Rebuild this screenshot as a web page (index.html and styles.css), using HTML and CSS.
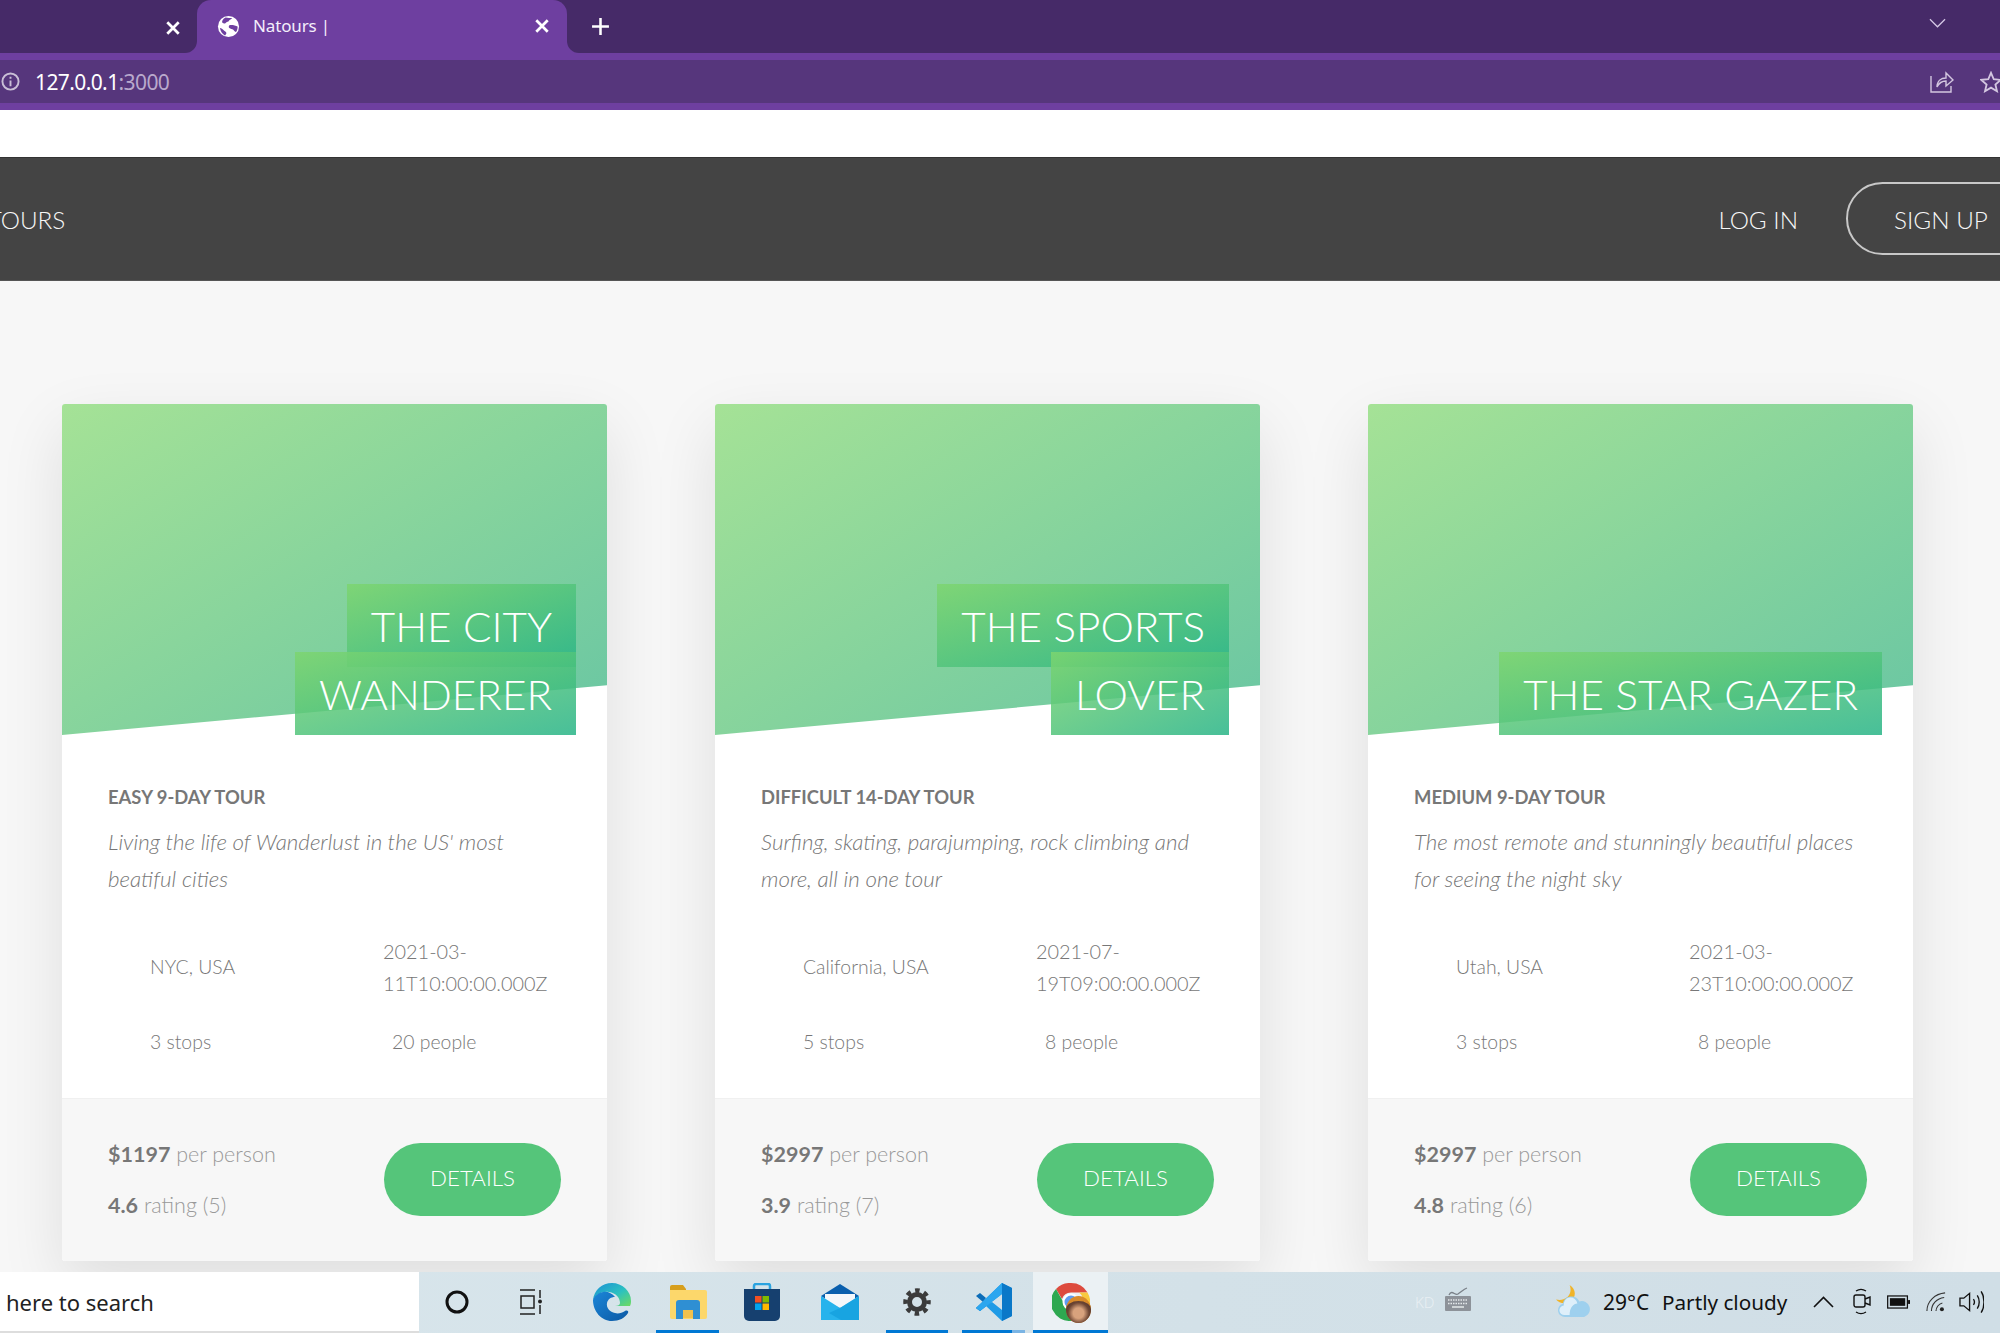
FILE: index.html
```html
<!DOCTYPE html>
<html lang="en">
<head>
<meta charset="utf-8">
<title>Natours</title>
<link rel="stylesheet" href="styles.css">
</head>
<body>
<div class="screen">
  <header class="browser">
    <div class="tabstrip">
      <div class="tab-side tab-side--left">
        <svg class="tab-x" viewBox="0 0 14 14"><path d="M2 2l10 10M12 2L2 12"/></svg>
      </div>
      <div class="tab-wrap">
        <div class="tab">
          <svg class="globe" viewBox="0 0 24 24"><circle cx="12" cy="12" r="11" fill="#fff"/><path fill="#6e3fa0" d="M9 2.500c2 .6 5 .4 7 .6-1 1.400-3 1.500-3.500 3-.4 1.300-2.500 1-3.500 2.200-.8 1-2.500.6-3.300-.3C4.600 6.800 6.500 3.300 9 2.500zM13.500 10.500c1.800-.5 6 .3 8 1.500.2 2-.6 4.500-1.700 5.800-1.600-.4-2.200-2.600-3.800-3-1.300-.4-3.300-.7-3.700-2-.2-.9.400-2 1.200-2.300zM3 13.500c1.500 0 3 1.200 4 2.300 1 1 2.700 1.700 2.800 3.100 0 1-.8 2-1.500 2.400C6 20.300 3.700 17 3 13.500z"/></svg>
          <span class="tab-title">Natours |</span>
          <svg class="tab-x" viewBox="0 0 14 14"><path d="M2 2l10 10M12 2L2 12"/></svg>
        </div>
      </div>
      <div class="tab-side tab-side--right">
        <svg class="tab-plus" viewBox="0 0 18 18"><path d="M9 1v16M1 9h16"/></svg>
        <svg class="tab-chevron" viewBox="0 0 18 10"><path d="M1 1l8 8 8-8"/></svg>
      </div>
    </div>
    <div class="addressbar">
      <svg class="info" viewBox="0 0 20 20"><circle cx="10" cy="10" r="8.500"/><path d="M10 9v6M10 5v2"/></svg>
      <span class="url">127.0.0.1<span class="url-port">:3000</span></span>
      <svg class="share" viewBox="0 0 24 22"><path d="M1 5v16h20v-6M7 16c0-6 4-9 9-9V2l7 7-7 6v-5c-4 0-7 2-9 6z"/></svg>
      <svg class="star" viewBox="0 0 24 24"><path d="M12 2l3 7 7.500.7-5.700 5 1.700 7.300-6.500-3.900-6.500 3.900 1.700-7.300-5.700-5L9 9z"/></svg>
    </div>
    <div class="browser-rule"></div>
  </header>

  <div class="bookmarks"></div>

  <nav class="nav">
    <a class="nav-tours">ALL TOURS</a>
    <div class="nav-user">
      <a class="nav-login">LOG IN</a>
      <a class="nav-signup">SIGN UP</a>
    </div>
  </nav>

  <main class="main">
    <article class="card">
      <div class="card-head">
        <div class="card-image"></div>
        <h3 class="card-name"><span>The City<br>Wanderer</span></h3>
      </div>
      <div class="card-details">
        <h4 class="card-sub">Easy 9-day tour</h4>
        <p class="card-text">Living the life of Wanderlust in the US' most beatiful cities</p>
        <div class="card-data">
          <span class="datum datum--location">NYC, USA</span>
          <span class="datum datum--date">2021-03-11T10:00:00.000Z</span>
          <span class="datum datum--stops">3 stops</span>
          <span class="datum datum--people">20 people</span>
        </div>
      </div>
      <div class="card-foot">
        <div class="card-prices">
          <p class="card-price"><b>$1197</b> per person</p>
          <p class="card-price"><b>4.6</b> rating (5)</p>
        </div>
        <a class="btn">DETAILS</a>
      </div>
    </article>

    <article class="card">
      <div class="card-head">
        <div class="card-image"></div>
        <h3 class="card-name"><span>The Sports<br>Lover</span></h3>
      </div>
      <div class="card-details">
        <h4 class="card-sub">Difficult 14-day tour</h4>
        <p class="card-text">Surfing, skating, parajumping, rock climbing and more, all in one tour</p>
        <div class="card-data">
          <span class="datum datum--location">California, USA</span>
          <span class="datum datum--date">2021-07-19T09:00:00.000Z</span>
          <span class="datum datum--stops">5 stops</span>
          <span class="datum datum--people">8 people</span>
        </div>
      </div>
      <div class="card-foot">
        <div class="card-prices">
          <p class="card-price"><b>$2997</b> per person</p>
          <p class="card-price"><b>3.9</b> rating (7)</p>
        </div>
        <a class="btn">DETAILS</a>
      </div>
    </article>

    <article class="card">
      <div class="card-head">
        <div class="card-image"></div>
        <h3 class="card-name"><span>The Star Gazer</span></h3>
      </div>
      <div class="card-details">
        <h4 class="card-sub">Medium 9-day tour</h4>
        <p class="card-text">The most remote and stunningly beautiful places for seeing the night sky</p>
        <div class="card-data">
          <span class="datum datum--location">Utah, USA</span>
          <span class="datum datum--date">2021-03-23T10:00:00.000Z</span>
          <span class="datum datum--stops">3 stops</span>
          <span class="datum datum--people">8 people</span>
        </div>
      </div>
      <div class="card-foot">
        <div class="card-prices">
          <p class="card-price"><b>$2997</b> per person</p>
          <p class="card-price"><b>4.8</b> rating (6)</p>
        </div>
        <a class="btn">DETAILS</a>
      </div>
    </article>
  </main>

  <footer class="taskbar">
    <div class="search">here to search</div>
    <div class="slot slot--circle">
      <svg class="tb-24" viewBox="0 0 24 24"><circle cx="12" cy="12" r="10" fill="none" stroke="#111" stroke-width="3"/></svg>
    </div>
    <div class="slot slot--task">
      <svg class="tb-26" viewBox="0 0 26 26"><path fill="none" stroke="#222" stroke-width="1.500" d="M2 1h15M2 25h15M3 7h13v12H3zM22 1v8M22 16v9"/><circle cx="22" cy="12.500" r="2" fill="#222"/></svg>
    </div>
    <div class="slot slot--edge">
      <svg class="tb-38" viewBox="0 0 38 38">
        <defs>
          <linearGradient id="edgeA" x1="0" y1="0" x2="1" y2="1"><stop offset="0" stop-color="#1a8fd6"/><stop offset=".55" stop-color="#2cc1c0"/><stop offset="1" stop-color="#6fdb5f"/></linearGradient>
          <linearGradient id="edgeB" x1="0" y1="0" x2="1" y2="1"><stop offset="0" stop-color="#1b86d8"/><stop offset="1" stop-color="#0c59a4"/></linearGradient>
        </defs>
        <path fill="url(#edgeA)" d="M19 0C9 0 1 7 0 17c3-6 10-9 16-8 7 1 11 6 11 11 0 2-2 3-5 3h15c1-2 1-4 1-5C38 8 29 0 19 0z"/>
        <path fill="url(#edgeB)" d="M0 17c0 11 8 21 19 21 7 0 13-3 16-8 1-2-1-3-3-2-3 2-7 3-10 2-5-1-9-5-8-10 1-4 4-6 8-6-3-4-8-6-12-5C5 10 1 13 0 17z"/>
      </svg>
    </div>
    <div class="slot slot--files slot--active">
      <svg class="tb-38" viewBox="0 0 38 34">
        <path fill="#d79f1d" d="M1 2a2 2 0 012-2h11l3 4v6H1z"/>
        <path fill="#fcd76b" d="M1 5h35a2 2 0 012 2v25a2 2 0 01-2 2H3a2 2 0 01-2-2z"/>
        <path fill="#2f8fd3" d="M7 18a3 3 0 013-3h18a3 3 0 013 3v16h-7v-9H14v9H7z"/>
        <path fill="#f0c14e" d="M14 25h10v8H14z"/>
      </svg>
    </div>
    <div class="slot slot--store">
      <svg class="tb-38" viewBox="0 0 36 38">
        <path fill="none" stroke="#2ba3e0" stroke-width="2.500" d="M10 8V3a2 2 0 012-2h12a2 2 0 012 2v5"/>
        <path fill="#16406f" d="M0 6h36v27a5 5 0 01-5 5H5a5 5 0 01-5-5z"/>
        <rect x="11" y="13" width="6.500" height="6.500" fill="#f25022"/>
        <rect x="18.500" y="13" width="6.500" height="6.500" fill="#7fba00"/>
        <rect x="11" y="20.500" width="6.500" height="6.500" fill="#00a4ef"/>
        <rect x="18.500" y="20.500" width="6.500" height="6.500" fill="#ffb900"/>
      </svg>
    </div>
    <div class="slot slot--mail">
      <svg class="tb-38" viewBox="0 0 38 36">
        <path fill="#0a5fad" d="M0 12L19 0l19 12-19 12z"/>
        <path fill="#f4f7fa" d="M4 10h30v7L19 24 4 17z"/>
        <path fill="#27b3ec" d="M0 12l19 12L38 12v24H0z"/>
        <path fill="#0d97d9" d="M38 12v24H20L8 29l11-5z" opacity=".55"/>
      </svg>
    </div>
    <div class="slot slot--gear slot--active">
      <svg class="tb-28" viewBox="0 0 28 28"><circle class="gear-body" cx="14" cy="14" r="7.500"/><circle class="gear-teeth" cx="14" cy="14" r="11.500"/></svg>
    </div>
    <div class="slot slot--code slot--active slot--active-split">
      <svg class="tb-38" viewBox="0 0 36 38">
        <path fill="#0b6cb8" d="M0 13l4-3 6 5-3 4z"/>
        <path fill="#0b6cb8" d="M0 25l4 3 6-5-3-4z"/>
        <path fill="#1f9be6" d="M26 0l10 5v28l-10 5-16-15 6-4 10 8V11L4 28l-4-3L26 0z"/>
        <path fill="#0a78c8" d="M26 0l10 5v28l-10 5z"/>
        <path fill="#2ba6ef" d="M26 0L0 25l4 3 22-17z"/>
      </svg>
    </div>
    <div class="slot slot--chrome slot--active">
      <span class="chrome-mark">
        <svg class="tb-38" viewBox="0 0 38 38">
          <path fill="#dd4b3e" d="M19 0a19 19 0 0116.500 9.500H19a9.500 9.500 0 00-9 6.500L4 6a19 19 0 0115-6z"/>
          <path fill="#f8c93e" d="M35.500 9.500A19 19 0 0119 38l9-14a9.500 9.500 0 00-1-14.500z"/>
          <path fill="#2ea850" d="M4 6l9.500 17a9.500 9.500 0 0014.500 1L19 38A19 19 0 014 6z"/>
          <circle cx="19" cy="19" r="7.500" fill="#5f9cf0" stroke="#fff" stroke-width="2"/>
        </svg>
        <span class="avatar"></span>
      </span>
    </div>
    <div class="tray">
      <span class="tray-kd">KD</span>
      <svg class="kbd" viewBox="0 0 26 26"><path fill="none" stroke="#7a8088" stroke-width="1.300" d="M4 9c3-6 6 1 9-1 3-2 6-5 9-6"/><rect x="0" y="10" width="26" height="15" rx="1" fill="#8d9299"/><path stroke="#e4e8ea" stroke-width="1.500" stroke-dasharray="1.500 1" d="M3 14h20M3 17.500h20"/><path stroke="#e4e8ea" stroke-width="1.500" d="M7 21h12"/></svg>
      <svg class="weather" viewBox="0 0 36 34">
        <path fill="#f0b429" d="M14 0c2 5 1 10-3 13-3 2-6 3-11 2 3 4 10 5 15 2 6-4 6-13-1-17z"/>
        <path fill="#9ed0ee" d="M9 33a7 7 0 01-2-13.700 9 9 0 0117-2.300 8 8 0 015 16z"/>
        <path fill="#f3f9fd" d="M9 31a5 5 0 01-1-10 7 7 0 0114-2c-4 0-8 4-8 12z" opacity=".75"/>
      </svg>
      <span class="tray-temp">29°C</span>
      <span class="tray-desc">Partly cloudy</span>
      <svg class="t-chev" viewBox="0 0 21 12"><path fill="none" stroke="#111" stroke-width="1.600" d="M1 11L10.500 1.500 20 11"/></svg>
      <svg class="t-cam" viewBox="0 0 18 27"><path fill="none" stroke="#111" stroke-width="1.300" d="M3 3c3-2 7-2 10 0M3 24c3 2 7 2 10 0"/><rect x="1" y="7" width="11" height="12" rx="2" fill="none" stroke="#111" stroke-width="1.400"/><path fill="none" stroke="#111" stroke-width="1.400" d="M12 11l5-2v8l-5-2"/></svg>
      <svg class="t-bat" viewBox="0 0 24 14"><rect x=".7" y=".7" width="20.600" height="12.600" fill="none" stroke="#111" stroke-width="1.300"/><rect x="3" y="3" width="16" height="8" fill="#111"/><rect x="22" y="5" width="2" height="4" fill="#111"/></svg>
      <svg class="t-wifi" viewBox="0 0 22 22"><path fill="none" stroke="#333" stroke-width="1.200" d="M1 21C1 10 10 2 21 1M6 21C6 13 12 7 20 6M11 21c0-4 3-8 7-9"/><circle cx="17.500" cy="19" r="2.200" fill="#222"/></svg>
      <svg class="t-spk" viewBox="0 0 26 24"><path fill="none" stroke="#111" stroke-width="1.400" d="M1 8h4l6-5v18l-6-5H1zM15 9c1.300 1.800 1.300 4.200 0 6M19 5c2.700 4 2.700 10 0 14M23 1c4 6 4 16 0 22"/></svg>
    </div>
  </footer>
</div>
</body>
</html>
```

FILE: styles.css
```css
* { box-sizing: border-box; margin: 0; padding: 0; }

html, body { width: 2000px; height: 1333px; overflow: hidden; }

body { background: #f7f7f7; font-family: "Lato", "Noto Sans", sans-serif; }

.screen { width: 2000px; height: 1333px; display: flex; flex-direction: column; overflow: hidden; }

/* Browser chrome */
.browser { flex: none; background: #6e3fa0; }

.tabstrip { display: flex; height: 60px; }

.tab-side { height: 53px; background: #462a68; display: flex; align-items: center; }
.tab-side--left { width: 197px; justify-content: flex-end; padding-right: 16px; border-bottom-right-radius: 12px; }
.tab-side--right { flex: 1; padding-left: 24px; justify-content: space-between; padding-right: 54px; border-bottom-left-radius: 12px; }

.tab-wrap { width: 370px; height: 53px; background: #462a68; }
.tab { height: 60px; background: #6e3fa0; border-radius: 14px 14px 0 0; display: flex; align-items: flex-start; padding: 15px 17px 0 20px; }

.tab-x { width: 16px; height: 16px; margin-top: 3px; fill: none; stroke: #fff; stroke-width: 2.400; }
.globe { width: 23px; height: 23px; flex: none; }
.tab-title { flex: 1; margin: -1px 0 0 13px; font: 17px/24px "Noto Sans", sans-serif; letter-spacing: -0.150px; color: #f4eefb; }
.tab-plus { width: 19px; height: 19px; fill: none; stroke: #fff; stroke-width: 2.400; }
.tab-chevron { width: 17px; height: 10px; margin-bottom: 8px; fill: none; stroke: #d6c8e6; stroke-width: 1.300; }

.addressbar { height: 43px; background: #56367c; display: flex; align-items: center; padding-left: 1px; }
.info { width: 19px; height: 19px; fill: none; stroke: #c9bfd6; stroke-width: 2; flex: none; }
.url { margin-left: 15px; font: 21px/28px "Noto Sans", sans-serif; color: #fff; letter-spacing: -0.600px; flex: 1; }
.url-port { color: #b9a9cc; }
.share { width: 24px; height: 22px; fill: none; stroke: #d3c7e0; stroke-width: 1.400; }
.star { width: 22px; height: 22px; margin: 0 -2px 0 26px; fill: none; stroke: #d3c7e0; stroke-width: 2; flex: none; }

.browser-rule { height: 7px; background: #6e3fa0; }

.bookmarks { flex: none; height: 47px; background: #fff; }

/* Site nav */
.nav { flex: none; height: 124px; background: #444; border-top: 1px solid #333; border-bottom: 1px solid #555; display: flex; align-items: center; justify-content: space-between; color: #f7f7f7; font-size: 24.300px; font-weight: 300; }
.nav-tours { margin-left: -58px; white-space: nowrap; }
.nav-user { display: flex; align-items: center; margin-right: -90px; gap: 48px; }
.nav-signup { width: 244px; height: 73px; margin-bottom: 2px; border: 2px solid #c8c8c8; border-radius: 37px; padding-left: 46px; line-height: 71px; }

/* Cards */
.main { flex: 1; min-height: 0; display: grid; grid-template-columns: repeat(3, 545px); column-gap: 108px; align-content: start; padding: 123px 0 0 62px; }

.card { height: 857px; background: #fff; border-radius: 3px; box-shadow: 0 24px 64px rgba(0,0,0,.1); display: flex; flex-direction: column; }

.card-head { position: relative; height: 331px; flex: none; }
.card-image { height: 100%; border-radius: 3px 3px 0 0; background: linear-gradient(to right bottom, #a5e296, #69c6a3); clip-path: polygon(0 0, 100% 0, 100% 85%, 0 100%); }

.card-name { position: absolute; right: 31px; bottom: 7px; width: 414px; text-align: right; font-size: 42.200px; font-weight: 300; line-height: 68px; text-transform: uppercase; color: #fff; }
.card-name span { padding: 15.700px 24px; background: linear-gradient(to right bottom, rgba(125,213,111,.85), rgba(40,180,135,.85)); -webkit-box-decoration-break: clone; box-decoration-break: clone; }

.card-details { flex: 1; padding: 50px 46px 0; }
.card-sub { font-size: 18.400px; line-height: 24px; font-weight: 700; text-transform: uppercase; color: #777; }
.card-text { margin-top: 14px; font-size: 22.350px; line-height: 37px; font-style: italic; font-weight: 300; color: #777; }

.card-data { margin-top: 38px; display: grid; grid-template-columns: 275px 1fr; row-gap: 27px; align-items: center; font-size: 19.400px; line-height: 32px; font-weight: 300; color: #777; }
.datum--location, .datum--stops { padding-left: 42px; }
.datum--date { font-size: 19.900px; }
.datum--people { padding-left: 9px; }

.card-foot { flex: none; height: 163px; background: #f7f7f7; border-top: 1px solid #f0f0f0; border-radius: 0 0 3px 3px; padding: 0 46px 2px; display: flex; align-items: center; justify-content: space-between; }
.card-prices { display: flex; flex-direction: column; gap: 19px; }
.card-price { font-size: 21.500px; line-height: 32px; font-weight: 300; color: #999; }
.card-price b { font-weight: 700; color: #777; }

.btn { width: 177px; height: 73px; border-radius: 37px; background: #55c57a; color: #fff; font-size: 22.300px; font-weight: 300; line-height: 70px; text-align: center; }

/* Windows taskbar */
.taskbar { position: relative; flex: none; height: 61px; background: linear-gradient(to right, #d9e6ec, #d3e1e8 60%, #d0dee6); display: flex; font-family: "Noto Sans", sans-serif; color: #111; }

.search { width: 419px; background: #fff; border-bottom: 2px solid #ddd; padding-left: 6px; font-size: 22px; line-height: 60px; color: #222; }

.slot { position: relative; display: flex; align-items: center; justify-content: center; padding-bottom: 2px; }
.slot--circle { width: 76px; }
.slot--task { width: 72px; }
.slot--edge { width: 89px; }
.slot--files { width: 63px; }
.slot--store { width: 86px; }
.slot--mail { width: 70px; margin-right: 11px; }
.slot--gear { width: 62px; margin-right: 14px; }
.slot--code { width: 63px; margin-right: 8px; }
.slot--chrome { width: 75px; background: #ebf1f4; }

.slot--active::after { content: ""; position: absolute; left: 0; right: 0; bottom: 0; height: 3px; background: #0078d4; }
.slot--active-split::after { background: linear-gradient(to right, #0078d4 80%, #7ab4e4 80%); }

.tb-24 { width: 24px; height: 24px; }
.tb-26 { width: 26px; height: 26px; }
.tb-28 { width: 28px; height: 28px; }
.tb-38 { width: 38px; height: 38px; }

.gear-body { fill: none; stroke: #3b3b3b; stroke-width: 5; }
.gear-teeth { fill: none; stroke: #3b3b3b; stroke-width: 4.500; stroke-dasharray: 4.500 4.530; stroke-dashoffset: 2.250; }

.chrome-mark { position: relative; display: block; width: 38px; height: 38px; }
.avatar { position: absolute; left: 14px; top: 13px; width: 25px; height: 27px; border-radius: 50%; background: radial-gradient(circle at 50% 55%, #d8a27d 0 30%, #6e4634 60%, #5a3a30 75%), #c07b2c; border-top: 5px solid #d98a2a; }

.tray { flex: 1; display: flex; align-items: center; padding-left: 307px; padding-bottom: 2px; }
.tray-kd { font-size: 15px; color: #e8eff3; font-weight: 300; width: 30px; }
.kbd { width: 26px; height: 26px; margin-bottom: 6px; }
.weather { width: 35px; height: 33px; margin: 0 12px 0 85px; }
.tray-temp { font-size: 21px; width: 59px; white-space: nowrap; }
.tray-desc { font-size: 20.700px; width: 151px; white-space: nowrap; }
.t-chev { width: 21px; height: 12px; }
.t-cam { width: 18px; height: 27px; margin-left: 19px; }
.t-bat { width: 23px; height: 14px; margin-left: 16px; }
.t-wifi { width: 20px; height: 20px; margin-left: 16px; }
.t-spk { width: 25px; height: 24px; margin-left: 13px; }
```
